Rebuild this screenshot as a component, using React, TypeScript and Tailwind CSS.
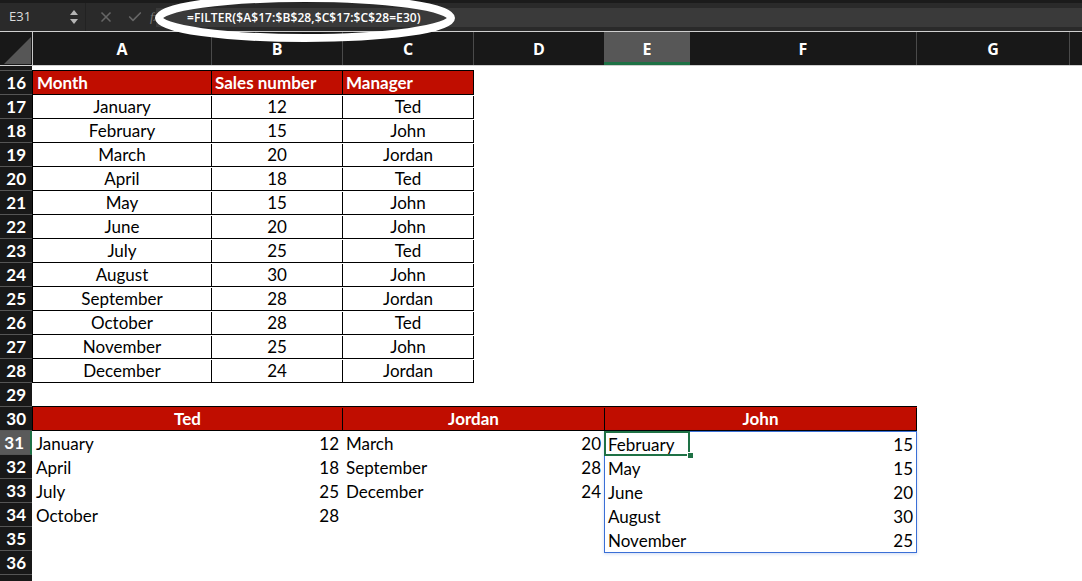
import React from "react";
import { X, Check } from "lucide-react";

const months = [
  ["January", "12", "Ted"],
  ["February", "15", "John"],
  ["March", "20", "Jordan"],
  ["April", "18", "Ted"],
  ["May", "15", "John"],
  ["June", "20", "John"],
  ["July", "25", "Ted"],
  ["August", "30", "John"],
  ["September", "28", "Jordan"],
  ["October", "28", "Ted"],
  ["November", "25", "John"],
  ["December", "24", "Jordan"],
];

const ted = [
  ["January", "12"],
  ["April", "18"],
  ["July", "25"],
  ["October", "28"],
];
const jordan = [
  ["March", "20"],
  ["September", "28"],
  ["December", "24"],
];
const john = [
  ["February", "15"],
  ["May", "15"],
  ["June", "20"],
  ["August", "30"],
  ["November", "25"],
];

const rowNumbers = Array.from({ length: 22 }, (_, i) => 16 + i);

const TopBar = () => (
  <div className="h-[31px] bg-[#2a2a2a] flex flex-col">
    <div className="h-[3px] bg-[#1b1b1b]" />
    <div className="flex-1 flex items-stretch">
      {/* name box */}
      <div className="w-[86px] flex items-center justify-between border-r border-[#222] pl-[9px] pr-[6px]">
        <span className="text-[13px] text-[#dcdcdc] font-['Open_Sans',sans-serif]">E31</span>
        <svg width="10" height="16" viewBox="0 0 10 16">
          <path d="M5 1 L9 6 L1 6 Z" fill="#b5b5b5" />
          <path d="M5 15 L9 10 L1 10 Z" fill="#b5b5b5" />
        </svg>
      </div>
      <div className="flex items-center gap-[13px] pl-[12px] w-[64px]">
        <X size={16} strokeWidth={2.5} color="#666" />
        <Check size={16} strokeWidth={2.5} color="#666" />
      </div>
      <div className="flex items-center text-[#777] italic text-[13px] font-['Liberation_Serif',serif] w-[6px]">
        fx
      </div>
      <div className="flex-1 mt-[5px] mb-[4px] bg-[#3a3a3a] flex items-center pl-[31px]">
        <span className="text-[12px] font-semibold text-white font-['Open_Sans',sans-serif] tracking-[0.1px]">
          =FILTER($A$17:$B$28,$C$17:$C$28=E30)
        </span>
      </div>
    </div>
  </div>
);

const ColumnHeaders = () => (
  <div className="h-[33px] bg-[#181818] flex text-white font-bold text-[16px] font-['Open_Sans',sans-serif]">
    <div className="w-[33px] border-r border-[#c8c8c8] flex items-end pl-[4px] pb-[1px]">
      <svg width="27" height="27" viewBox="0 0 27 27">
        <path d="M27 0 L27 27 L0 27 Z" fill="#565656" />
      </svg>
    </div>
    <div className="w-[179px] border-r border-[#4a4a4a] flex items-center justify-center">A</div>
    <div className="w-[131px] border-r border-[#4a4a4a] flex items-center justify-center">B</div>
    <div className="w-[131px] border-r border-[#4a4a4a] flex items-center justify-center">C</div>
    <div className="w-[130px] flex items-center justify-center">D</div>
    <div className="w-[86px] bg-[#575757] border-b-[3px] border-[#1e7145] flex items-center justify-center pt-[3px]">
      E
    </div>
    <div className="w-[227px] border-r border-[#4a4a4a] flex items-center justify-center">F</div>
    <div className="w-[153px] border-r border-[#4a4a4a] flex items-center justify-center">G</div>
    <div className="flex-1" />
  </div>
);

const RowLabels = () => (
  <div className="w-[32px] bg-[#181818] flex flex-col text-white font-bold text-[17px] shrink-0">
    <div className="h-[5px] border-b border-[#555]" />
    {rowNumbers.map((n) => (
      <div
        key={n}
        className={
          n === 31
            ? "h-[24px] shrink-0 border-b border-[#555] bg-[#5a5a5a] flex items-center justify-end pr-[6px] border-r-2 border-r-[#1e7145]"
            : "h-[24px] shrink-0 border-b border-[#555] flex items-center justify-end pr-[6px]"
        }
      >
        {n}
      </div>
    ))}
  </div>
);

const SourceTable = () => (
  <div className="w-[442px] border-t border-l border-black">
    <div className="h-[24px] flex border-b border-black bg-[#c00d00] text-white font-bold">
      <div className="w-[179px] border-r border-black pl-[4px] pt-px flex items-center">Month</div>
      <div className="w-[131px] border-r border-black pl-[3px] pt-px flex items-center">Sales number</div>
      <div className="w-[131px] border-r border-black pl-[3px] pt-px flex items-center">Manager</div>
    </div>
    {months.map(([m, n, who]) => (
      <div key={m} className="h-[24px] flex border-b border-black pt-px">
        <div className="w-[179px] border-r border-black flex items-center justify-center">{m}</div>
        <div className="w-[131px] border-r border-black flex items-center justify-center">{n}</div>
        <div className="w-[131px] border-r border-black flex items-center justify-center">{who}</div>
      </div>
    ))}
  </div>
);

const ListRows = ({ rows, className }: { rows: string[][]; className: string }) => (
  <div className={className}>
    {rows.map(([m, n]) => (
      <div key={m} className="h-[24px] flex items-center justify-between pt-px">
        <span>{m}</span>
        <span>{n}</span>
      </div>
    ))}
  </div>
);

const ManagerTables = () => (
  <div className="w-[885px]">
    <div className="h-[25px] flex border-t border-b border-l border-black bg-[#c00d00] text-white font-bold pt-px">
      <div className="w-[310px] border-r border-black flex items-center justify-center">Ted</div>
      <div className="w-[262px] border-r border-black flex items-center justify-center">Jordan</div>
      <div className="w-[312px] border-r border-black flex items-center justify-center">John</div>
    </div>
    <div className="flex items-start">
      <ListRows rows={ted} className="w-[311px] pl-[4px] pr-[4px]" />
      <ListRows rows={jordan} className="w-[261px] pl-[3px] pr-[3px]" />
      <div className="relative w-[313px]">
        <ListRows
          rows={john}
          className="border border-[#3a6fd6] pl-[3px] pr-[3px] shadow-[0_1px_3px_rgba(58,111,214,0.25)]"
        />
        {/* active cell E31 */}
        <div className="absolute left-0 top-0 w-[86px] h-[25px] border-2 border-[#1e7145]" />
        <div className="absolute left-[83px] top-[21px] w-[7px] h-[7px] bg-[#1e7145] border border-white" />
      </div>
    </div>
  </div>
);

const App: React.FC = () => {
  return (
    <div className="relative w-[1082px] h-[581px] overflow-hidden bg-white font-['Lato','Noto_Sans',sans-serif] text-[17px] text-black">
      <TopBar />
      <div className="h-px bg-[#cfcfcf]" />
      <ColumnHeaders />
      <div className="h-px bg-[#cfcfcf]" />

      <div className="flex">
        <RowLabels />
        <div className="flex flex-col pt-[4px]">
          <SourceTable />
          <div className="h-[23px]" />
          <ManagerTables />
        </div>
      </div>

      {/* hand-drawn highlight around the formula */}
      <svg
        className="absolute left-[150px] top-[-10px] pointer-events-none"
        width="312"
        height="62"
        viewBox="0 0 312 62"
      >
        <ellipse cx="155" cy="28" rx="146" ry="20" fill="none" stroke="white" strokeWidth="8" />
      </svg>
    </div>
  );
};

export default App;
